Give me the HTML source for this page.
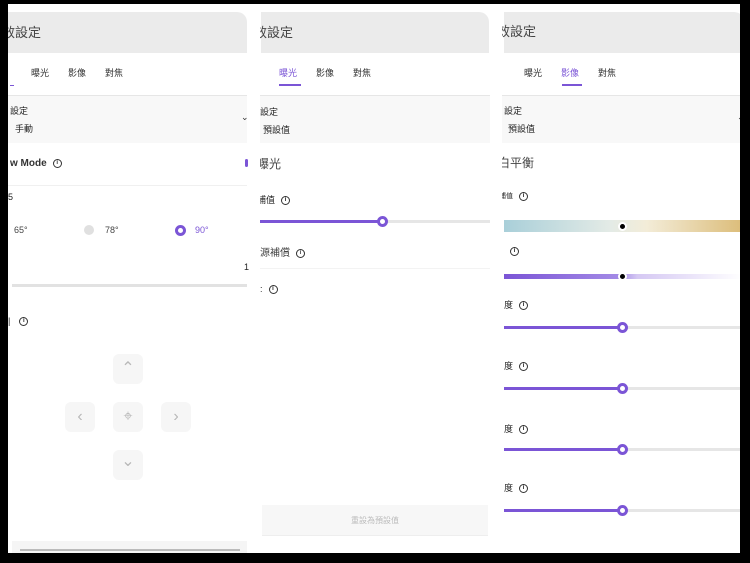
<!DOCTYPE html>
<html><head><meta charset="utf-8"><style>
*{margin:0;padding:0;box-sizing:border-box}
body{width:750px;height:563px;background:#000;position:relative;overflow:hidden;font-family:"Liberation Sans","Noto Sans CJK TC",sans-serif;color:#333}
.frame{position:absolute;left:8px;top:4px;width:732px;height:549px;background:#fff;overflow:hidden}
.p{position:absolute;top:0;height:549px;overflow:hidden;background:#fff}
.a{position:absolute;white-space:nowrap}
.hd{position:absolute;top:8px;height:41px;background:#ebebeb;border-radius:0 10px 0 0}
.t{font-size:13px;color:#444}
.tab{font-size:9px;color:#333}
.sec{position:absolute;top:91px;height:48px;background:#f8f8f8;border-top:1px solid #e6e6e6}
.s{font-size:9px;color:#222}
.i{display:inline-block;width:9px;height:9px;border:1px solid #333;border-radius:50%;font-size:6px;line-height:7px;text-align:center;vertical-align:middle;margin-left:6px;font-weight:bold}
.trk{position:absolute;height:3px;background:#e6e6e6}
.fill{position:absolute;height:3px;background:#7b55d6}
.th{position:absolute;width:11px;height:11px;border-radius:50%;border:3px solid #7b55d6;background:#fff}
.btn{position:absolute;width:30px;height:30px;background:#f6f6f6;border-radius:6px;color:#b8b8b8;font-size:16px;text-align:center;line-height:30px}
</style></head><body>
<div class="frame">
<!-- panel 1 -->
<div class="p" style="left:0;width:241px">
<div class="hd" style="left:0;width:239px"></div>
<div class="a t" style="left:-6px;top:18px">效設定</div>
<div class="a tab" style="left:23px;top:62px">曝光</div>
<div class="a tab" style="left:60px;top:62px">影像</div>
<div class="a tab" style="left:97px;top:62px">對焦</div>
<div class="a" style="left:2px;top:81px;width:4px;height:1px;background:#7b55d6"></div>
<div class="sec" style="left:0;width:239px"></div>
<div class="a s" style="left:2px;top:100px">設定</div>
<div class="a s" style="left:7px;top:118px">手動</div>
<div class="a" style="left:233px;top:108px;font-size:9px">⌄</div>
<div class="a" style="left:2px;top:154px;font-size:10px;font-weight:bold;color:#333">w Mode<span class="i">i</span></div>
<div class="a" style="left:237px;top:155px;width:3px;height:8px;background:#7b55d6;border-radius:2px"></div>
<div class="a" style="left:0;top:181px;width:239px;height:1px;background:#f0f0f0"></div>
<div class="a s" style="left:0;top:188px">5</div>
<div class="a s" style="left:6px;top:221px;color:#444">65°</div>
<div class="a" style="left:76px;top:221px;width:10px;height:10px;border-radius:50%;background:#e0e0e0"></div>
<div class="a s" style="left:97px;top:221px;color:#444">78°</div>
<div class="a" style="left:167px;top:221px;width:11px;height:11px;border-radius:50%;border:3px solid #7b55d6"></div>
<div class="a s" style="left:187px;top:221px;color:#7b55d6">90°</div>
<div class="a s" style="left:236px;top:258px">1</div>
<div class="a" style="left:4px;top:280px;width:235px;height:3px;background:#e2e2e2"></div>
<div class="a s" style="left:0;top:312px">|<span class="i" style="margin-left:9px">i</span></div>
<div class="btn" style="left:105px;top:350px">⌃</div>
<div class="btn" style="left:57px;top:398px">‹</div>
<div class="btn" style="left:105px;top:398px">⌖</div>
<div class="btn" style="left:153px;top:398px">›</div>
<div class="btn" style="left:105px;top:446px;line-height:24px">⌄</div>
<div class="a" style="left:4px;top:537px;width:235px;height:12px;background:#f5f5f5"></div>
<div class="a" style="left:12px;top:545px;width:220px;height:2px;background:#bbb"></div>
</div>
<!-- panel 2 -->
<div class="p" style="left:252px;width:230px">
<div class="hd" style="left:1px;width:228px"></div>
<div class="a t" style="left:-6px;top:18px">效設定</div>
<div class="a tab" style="left:19px;top:62px;color:#7b55d6">曝光</div>
<div class="a" style="left:19px;top:80px;width:22px;height:2px;background:#7b55d6"></div>
<div class="a tab" style="left:56px;top:62px">影像</div>
<div class="a tab" style="left:93px;top:62px">對焦</div>
<div class="sec" style="left:0;width:230px"></div>
<div class="a s" style="left:0;top:101px">設定</div>
<div class="a s" style="left:3px;top:119px">預設值</div>
<div class="a" style="left:-3px;top:151px;font-size:12px;color:#444">曝光</div>
<div class="a s" style="left:-3px;top:189px">補值<span class="i">i</span></div>
<div class="trk" style="left:0;top:216px;width:230px"></div>
<div class="fill" style="left:0;top:216px;width:122px"></div>
<div class="th" style="left:117px;top:212px"></div>
<div class="a" style="left:0;top:240px;font-size:10px;color:#444">源補償<span class="i">i</span></div>
<div class="a" style="left:0;top:264px;width:230px;height:1px;background:#f3f3f3"></div>
<div class="a s" style="left:0;top:280px">:<span class="i">i</span></div>
<div class="a" style="left:2px;top:501px;width:226px;height:31px;background:#f7f7f7;border-bottom:1px solid #eee;text-align:center;line-height:31px;font-size:8px;color:#bbb">重設為預設值</div>
</div>
<!-- panel 3 -->
<div class="p" style="left:494px;width:238px">
<div class="hd" style="left:2px;width:240px"></div>
<div class="a t" style="left:-5px;top:17px">效設定</div>
<div class="a tab" style="left:22px;top:62px">曝光</div>
<div class="a tab" style="left:59px;top:62px;color:#7b55d6">影像</div>
<div class="a" style="left:60px;top:80px;width:20px;height:2px;background:#7b55d6"></div>
<div class="a tab" style="left:96px;top:62px">對焦</div>
<div class="sec" style="left:0;width:238px"></div>
<div class="a s" style="left:2px;top:100px">設定</div>
<div class="a s" style="left:6px;top:118px">預設值</div>
<div class="a" style="left:235px;top:108px;font-size:9px">⌄</div>
<div class="a" style="left:-4px;top:150px;font-size:12px;color:#444">白平衡</div>
<div class="a s" style="left:-3px;top:187px;font-size:7px">補值<span class="i">i</span></div>
<div class="a" style="left:2px;top:216px;width:238px;height:12px;background:linear-gradient(90deg,#a9cfd9,#e4ebe6 45%,#f3ecd8 60%,#dcbd7a)"></div>
<div class="a" style="left:116px;top:218px;width:9px;height:9px;border-radius:50%;background:#000;border:2px solid #fff"></div>
<div class="a s" style="left:0;top:242px"><span class="i" style="margin-left:8px">i</span></div>
<div class="a" style="left:2px;top:270px;width:238px;height:5px;background:linear-gradient(90deg,#7b55d6,#a38ae6 48%,#d5c8f3 56%,#fff)"></div>
<div class="a" style="left:116px;top:268px;width:9px;height:9px;border-radius:50%;background:#000;border:2px solid #fff"></div>
<div class="a s" style="left:2px;top:294px">度<span class="i">i</span></div>
<div class="trk" style="left:2px;top:322px;width:238px"></div><div class="fill" style="left:2px;top:322px;width:118px"></div><div class="th" style="left:115px;top:318px"></div>
<div class="a s" style="left:2px;top:355px">度<span class="i">i</span></div>
<div class="trk" style="left:2px;top:383px;width:238px"></div><div class="fill" style="left:2px;top:383px;width:118px"></div><div class="th" style="left:115px;top:379px"></div>
<div class="a s" style="left:2px;top:418px">度<span class="i">i</span></div>
<div class="trk" style="left:2px;top:444px;width:238px"></div><div class="fill" style="left:2px;top:444px;width:118px"></div><div class="th" style="left:115px;top:440px"></div>
<div class="a s" style="left:2px;top:477px">度<span class="i">i</span></div>
<div class="trk" style="left:2px;top:505px;width:238px"></div><div class="fill" style="left:2px;top:505px;width:118px"></div><div class="th" style="left:115px;top:501px"></div>
</div>
</div>
</body></html>
